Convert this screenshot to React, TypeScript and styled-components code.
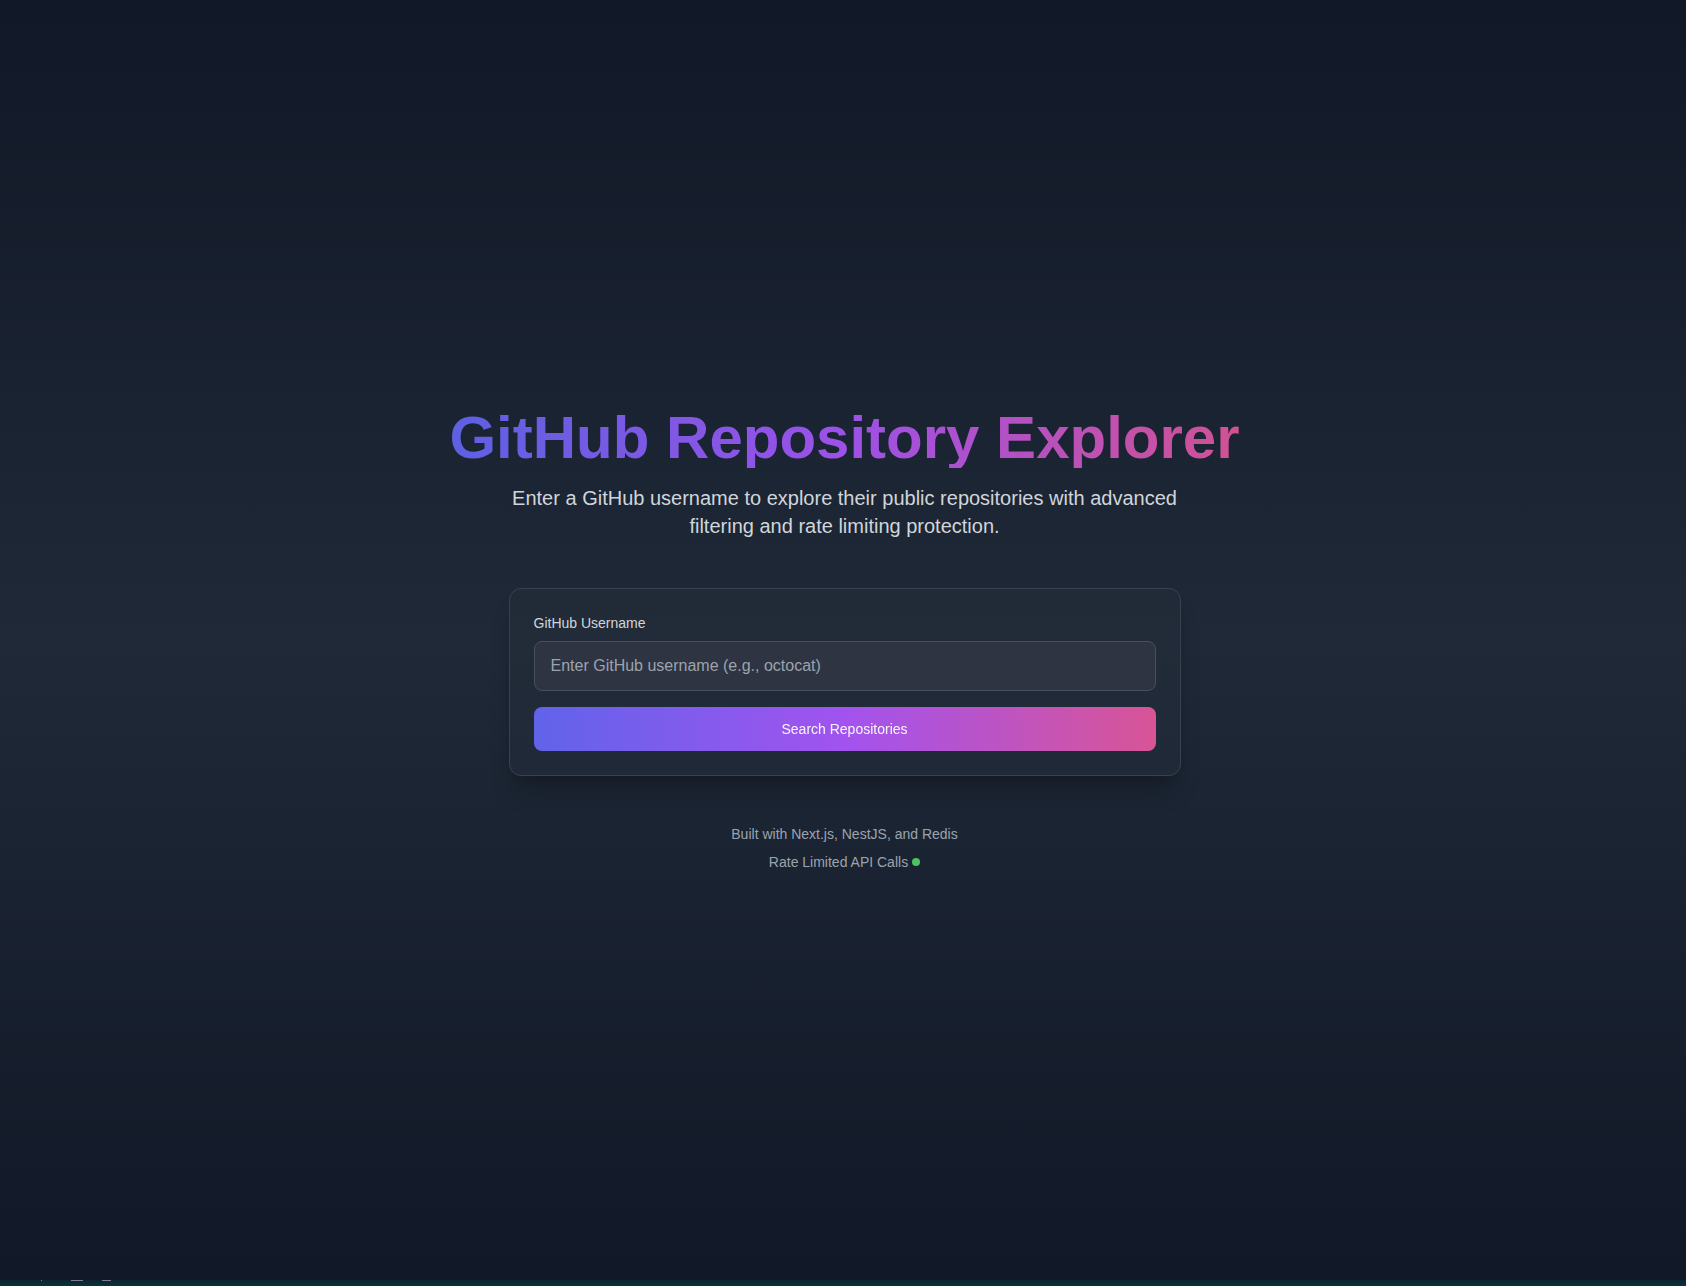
import React, { useState } from "react";
import styled, { createGlobalStyle } from "styled-components";

const GlobalStyle = createGlobalStyle`
  html, body {
    margin: 0;
    padding: 0;
    background: #111827;
  }
  body {
    font-family: "Liberation Sans", Arial, Helvetica, sans-serif;
    -webkit-font-smoothing: antialiased;
  }
  * { box-sizing: border-box; }
`;

const Page = styled.div`
  display: flex;
  flex-direction: column;
  height: 1286px;
  overflow: hidden;
`;

const Main = styled.main`
  flex: 0 0 1280px;
  display: flex;
  flex-direction: column;
  align-items: center;
  justify-content: center;
  padding-left: 3px;
  background: linear-gradient(to bottom, #111827 0%, #1f2937 50%, #111827 100%);
`;

const Title = styled.h1`
  margin: 0 0 16px;
  font-size: 60px;
  line-height: 60px;
  font-weight: 700;
  background: linear-gradient(to right, #6366f1, #a855f7, #e2559c);
  -webkit-background-clip: text;
  background-clip: text;
  color: transparent;
  opacity: 0.92;
`;

const Subtitle = styled.p`
  margin: 0 0 48px;
  max-width: 672px;
  text-align: center;
  font-size: 20px;
  line-height: 28px;
  color: #d1d5db;
`;

const Card = styled.form`
  width: 672px;
  padding: 24px;
  border: 1px solid #374151;
  border-radius: 12px;
  background: rgba(38, 46, 60, 0.45);
  box-shadow: 0 20px 25px -5px rgba(0, 0, 0, 0.18), 0 8px 10px -6px rgba(0, 0, 0, 0.15);
  display: flex;
  flex-direction: column;
`;

const Label = styled.label`
  display: block;
  margin-bottom: 8px;
  font-size: 14px;
  line-height: 20px;
  font-weight: 400;
  color: #d1d5db;
`;

const Input = styled.input`
  width: 100%;
  height: 50px;
  padding: 12px 16px;
  border: 1px solid #474f5c;
  border-radius: 8px;
  background: #2e3441;
  color: #f3f4f6;
  font-family: inherit;
  font-size: 16px;
  line-height: 24px;
  outline: none;
  &::placeholder {
    color: #9ca3af;
  }
`;

const Button = styled.button`
  margin-top: 16px;
  width: 100%;
  height: 44px;
  border: none;
  border-radius: 8px;
  background: linear-gradient(to right, #6366f1, #a855f7, #e0569a);
  color: #ffffff;
  font-family: inherit;
  font-size: 14px;
  line-height: 20px;
  font-weight: 400;
  cursor: pointer;
  opacity: 0.96;
`;

const Footer = styled.footer`
  margin-top: 48px;
  display: flex;
  flex-direction: column;
  align-items: center;
  gap: 8px;
`;

const FootLine = styled.p`
  margin: 0;
  display: flex;
  align-items: center;
  gap: 4px;
  font-size: 14px;
  line-height: 20px;
  color: #9ca3af;
`;

const Dot = styled.span`
  display: inline-block;
  width: 8px;
  height: 8px;
  border-radius: 50%;
  background: #4cc35e;
`;

const Strip = styled.div`
  flex: 0 0 6px;
  position: relative;
  background: linear-gradient(to bottom, #0c2431, #0b2f3c);
`;

const Mark = styled.span<{ $left: number; $width: number }>`
  position: absolute;
  top: 0;
  left: ${(p) => p.$left}px;
  width: ${(p) => p.$width}px;
  height: 1px;
  background: #7b8089;
`;

export default function App() {
  const [username, setUsername] = useState("");
  return (
    <>
      <GlobalStyle />
      <Page>
        <Main>
          <Title>GitHub Repository Explorer</Title>
          <Subtitle>
            Enter a GitHub username to explore their public repositories with advanced filtering and
            rate limiting protection.
          </Subtitle>
          <Card onSubmit={(e) => e.preventDefault()}>
            <Label htmlFor="username">GitHub Username</Label>
            <Input
              id="username"
              placeholder="Enter GitHub username (e.g., octocat)"
              value={username}
              onChange={(e) => setUsername(e.target.value)}
            />
            <Button type="submit">Search Repositories</Button>
          </Card>
          <Footer>
            <FootLine>Built with Next.js, NestJS, and Redis</FootLine>
            <FootLine>
              Rate Limited API Calls <Dot />
            </FootLine>
          </Footer>
        </Main>
        <Strip>
          <Mark $left={41} $width={1} />
          <Mark $left={71} $width={12} />
          <Mark $left={102} $width={9} />
        </Strip>
      </Page>
    </>
  );
}
